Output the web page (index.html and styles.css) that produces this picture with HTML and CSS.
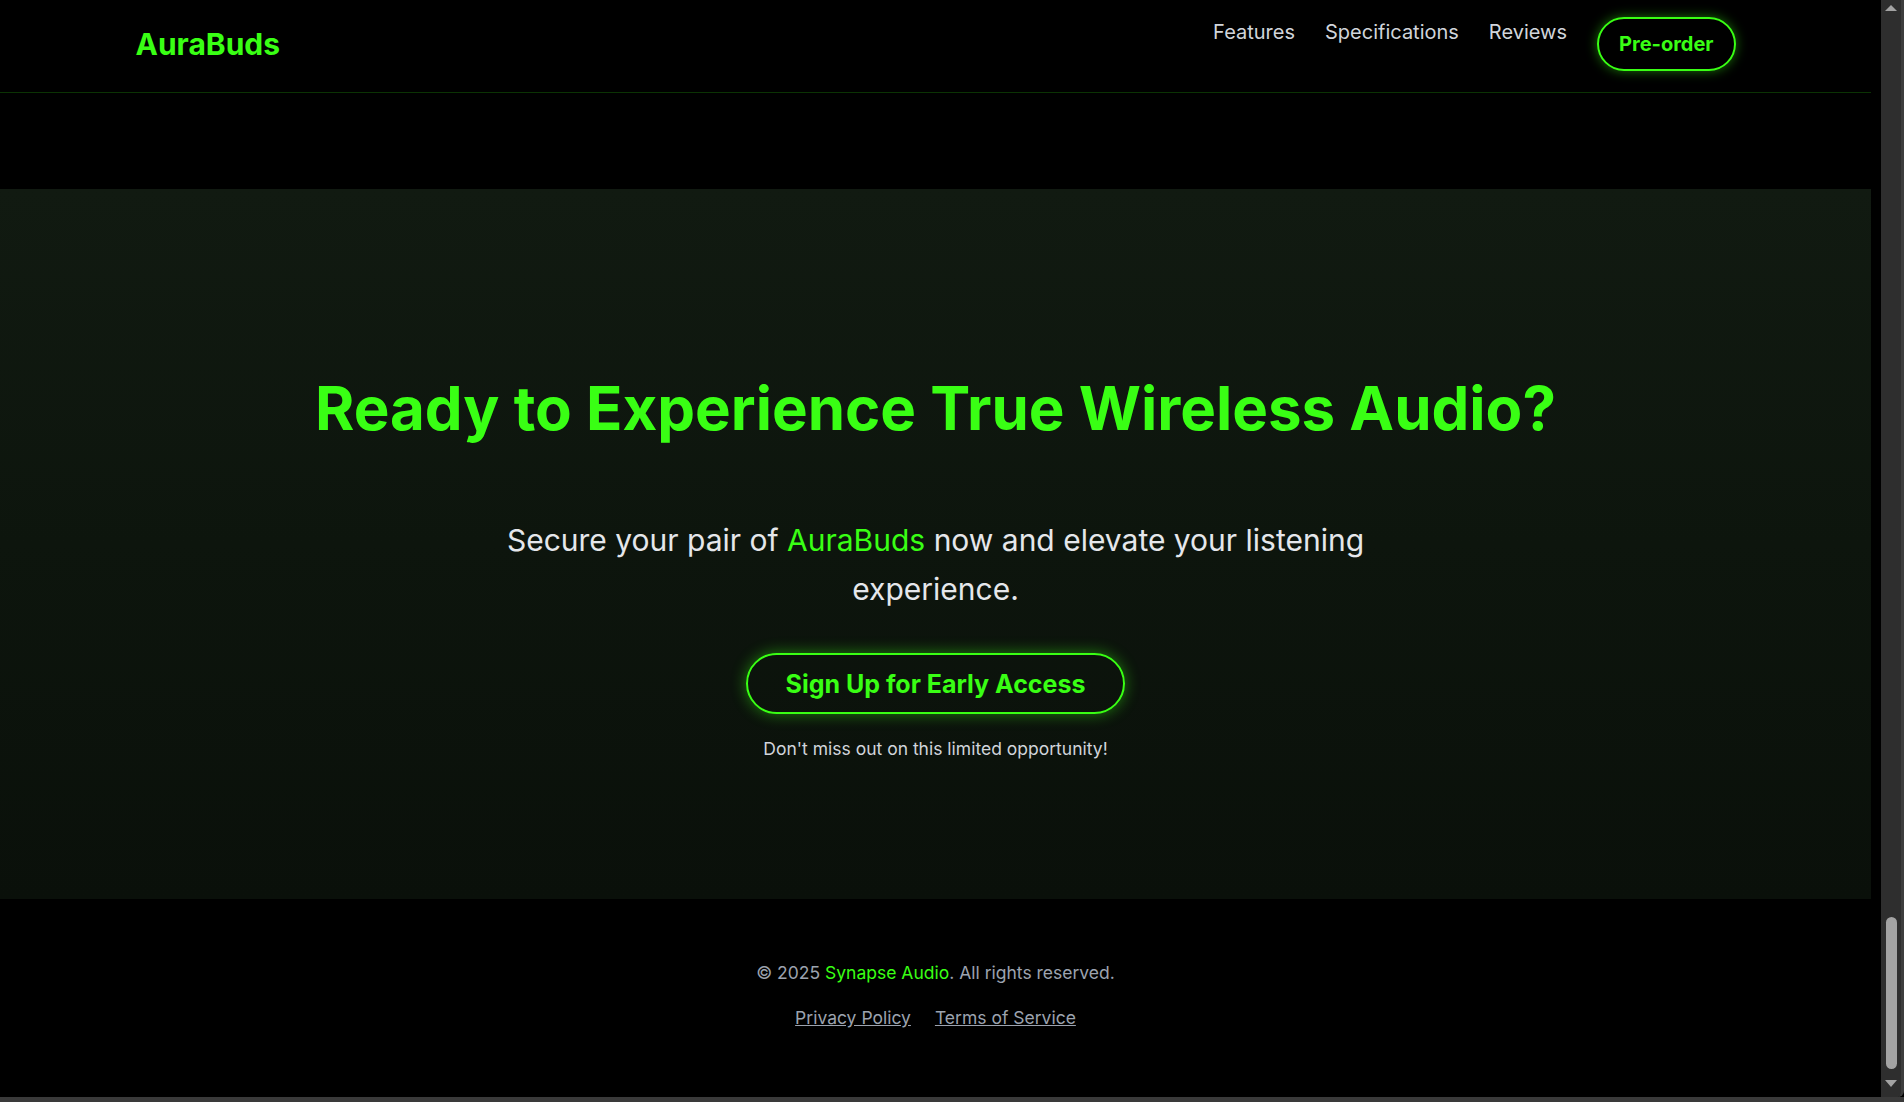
FILE: index.html
```html
<!DOCTYPE html>
<html lang="en">
<head>
<meta charset="utf-8">
<title>AuraBuds</title>
<link rel="stylesheet" href="styles.css">
</head>
<body>
<div class="page">
  <header class="site-header">
    <div class="header-inner">
      <a class="logo" href="#">AuraBuds</a>
      <nav class="nav">
        <a class="nav-link" href="#">Features</a>
        <a class="nav-link" href="#">Specifications</a>
        <a class="nav-link" href="#">Reviews</a>
        <a class="btn-preorder" href="#">Pre-order</a>
      </nav>
    </div>
  </header>
  <main>
    <section class="section-tail"></section>
    <section class="cta">
      <h2 class="cta-title">Ready to Experience True Wireless Audio?</h2>
      <p class="cta-text">Secure your pair of <span class="accent">AuraBuds</span> now and elevate your listening experience.</p>
      <a class="btn-cta" href="#">Sign Up for Early Access</a>
      <p class="cta-note">Don't miss out on this limited opportunity!</p>
    </section>
  </main>
  <footer class="site-footer">
    <p class="copyright">© 2025 <span class="accent">Synapse Audio</span>. All rights reserved.</p>
    <div class="footer-links">
      <a href="#">Privacy Policy</a>
      <a href="#">Terms of Service</a>
    </div>
  </footer>
</div>
<div class="scrollbar" aria-hidden="true">
  <span class="sb-up"></span>
  <span class="sb-thumb"></span>
  <span class="sb-down"></span>
</div>
<div class="window-edge" aria-hidden="true"></div>
</body>
</html>
```

FILE: styles.css
```css
html {
  background: #000;
}
body {
  margin: 0;
  background: #000;
  font-family: Inter, "Noto Sans", "Liberation Sans", sans-serif;
  color: #e5e7eb;
}
a {
  text-decoration: none;
  color: inherit;
}
.page {
  margin-right: 33px;
  background: #000;
}
.accent {
  color: #39ff14;
}

/* header */
.site-header {
  background: #000;
  border-bottom: 1px solid rgba(57, 255, 20, 0.2);
  padding: 17px 0 21px;
}
.header-inner {
  max-width: 1600px;
  margin: 0 auto;
  display: flex;
  align-items: center;
  justify-content: space-between;
  height: 54px;
}
.logo {
  font-size: 30px;
  line-height: 36px;
  font-weight: 700;
  color: #39ff14;
}
.nav {
  display: flex;
  align-items: center;
  gap: 30px;
}
.nav-link {
  font-size: 20px;
  line-height: 28px;
  padding-bottom: 24px;
  color: #d1d5db;
}
.btn-preorder {
  display: block;
  font-size: 20px;
  line-height: 28px;
  font-weight: 700;
  color: #39ff14;
  border: 2px solid #39ff14;
  border-radius: 9999px;
  padding: 11px 20px;
  box-shadow: 0 0 12px rgba(57, 255, 20, 0.45);
}

/* sections */
.section-tail {
  height: 96px;
  background: #000;
}
.cta {
  background: linear-gradient(180deg, #111a11 0%, #0d150d 50%, #0a100a 100%);
  padding: 189px 24px 136px;
  text-align: center;
}
.cta-title {
  margin: 0 0 78px;
  font-size: 60px;
  line-height: 1;
  font-weight: 700;
  color: #39ff14;
}
.cta-text {
  margin: 0 auto 39px;
  max-width: 896px;
  font-size: 30px;
  line-height: 49px;
  color: #e5e7eb;
}
.btn-cta {
  display: inline-block;
  font-size: 25px;
  line-height: 32px;
  font-weight: 700;
  color: #39ff14;
  border: 2px solid #39ff14;
  border-radius: 9999px;
  padding: 13px 38px 12px;
  box-shadow: 0 0 15px rgba(57, 255, 20, 0.45);
}
.cta-note {
  margin: 21px 0 0;
  font-size: 17.5px;
  line-height: 28px;
  color: #d1d5db;
}

/* footer */
.site-footer {
  background: #000;
  padding: 60px 24px 70px;
  text-align: center;
  color: #9ca3af;
  font-size: 17.5px;
  line-height: 28px;
}
.copyright {
  margin: 0;
}
.footer-links {
  margin-top: 17px;
  display: flex;
  justify-content: center;
  gap: 24px;
}
.footer-links a {
  text-decoration: underline;
  color: #9ca3af;
}

/* browser chrome look-alike (scrollbar at bottom position) */
.scrollbar {
  position: fixed;
  top: 0;
  right: 0;
  width: 20px;
  height: 1097px;
  background: #2e2e2e;
  border-right: 3px solid #3d3d3d;
  border-bottom-right-radius: 6px;
  display: flex;
  flex-direction: column;
  align-items: center;
}
.sb-up {
  margin-top: 5px;
  width: 0;
  height: 0;
  border-left: 6px solid transparent;
  border-right: 6px solid transparent;
  border-bottom: 6px solid #a3a3a3;
}
.sb-thumb {
  margin-top: auto;
  width: 11px;
  height: 152px;
  border-radius: 6px;
  background: #a3a3a3;
}
.sb-down {
  margin: 11px 0 10px;
  width: 0;
  height: 0;
  border-left: 6px solid transparent;
  border-right: 6px solid transparent;
  border-top: 7px solid #a3a3a3;
}
.window-edge {
  position: fixed;
  left: 0;
  right: 0;
  bottom: 0;
  height: 5px;
  background: #3a3a3a;
}
```
